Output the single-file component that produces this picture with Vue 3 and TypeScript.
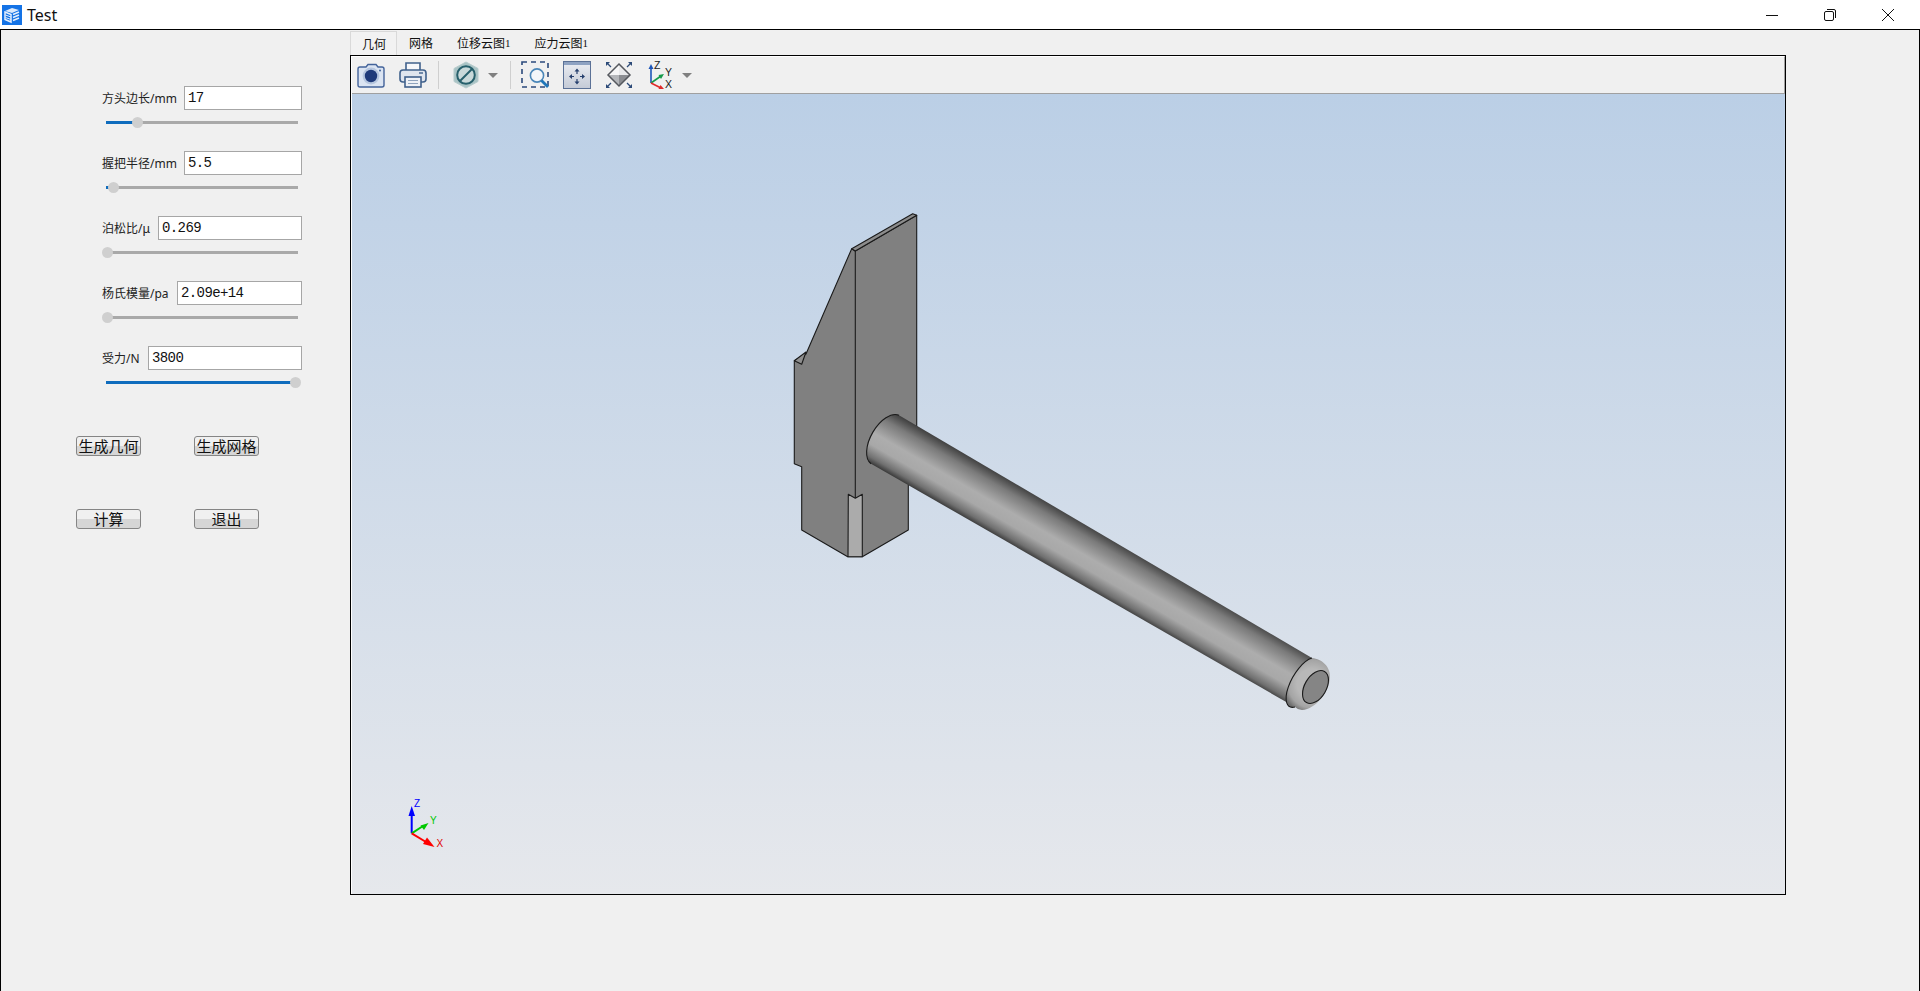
<template>
  <div class="window">
    <header class="titlebar">
      <svg class="app-icon" width="20" height="20" viewBox="0 0 20 20">
        <rect width="20" height="20" fill="#1473e6" />
        <path d="M3 6 L10 3 L17 5 L10 8 Z" fill="#dceafc" />
        <path d="M3 7 L9 9.5 V17 L3 14.5 Z" fill="none" stroke="#e6f0fd" stroke-width="1.5" />
        <path d="M3.5 10 L9 12 M3.5 12.5 L9 14.5" stroke="#e6f0fd" stroke-width="1" />
        <path d="M11 9.5 L17 7 M11 12.5 L17 10 M11 15.5 L17 13" stroke="#e6f0fd" stroke-width="1.6" />
      </svg>
      <span class="title-text">Test</span>
      <div class="win-controls">
        <div class="win-btn">
          <svg width="14" height="14" viewBox="0 0 14 14"><path d="M1 7.5 H13" stroke="#111" fill="none" /></svg>
        </div>
        <div class="win-btn">
          <svg width="14" height="14" viewBox="0 0 14 14">
            <rect x="1.5" y="3.5" width="9" height="9" rx="1.5" fill="none" stroke="#111" />
            <path d="M4 1.5 H11 Q12.5 1.5 12.5 3 V10" fill="none" stroke="#111" />
          </svg>
        </div>
        <div class="win-btn">
          <svg width="14" height="14" viewBox="0 0 14 14"><path d="M1 1 L13 13 M13 1 L1 13" stroke="#111" fill="none" /></svg>
        </div>
      </div>
    </header>

    <div class="body">
      <aside class="sidebar">
        <div v-for="p in params" :key="p.label" class="param">
          <div class="param-row">
            <label class="param-label">{{ p.label }}</label>
            <input class="param-input" type="text" :value="p.value" :style="{ width: `${p.inputWidth}px` }" />
          </div>
          <div class="slider">
            <div class="slider-fill" :style="{ width: fillWidth(p.ratio) }" />
            <div class="slider-handle" :style="{ left: handleLeft(p.ratio) }" />
          </div>
        </div>
        <div class="actions">
          <button v-for="a in actions" :key="a" class="action" type="button">{{ a }}</button>
        </div>
      </aside>

      <main class="main">
        <nav class="tabs">
          <div v-for="(t, i) in tabs" :key="t.name" :class="['tab', i === 0 && 'tab--active']">
            {{ t.name }}<span v-if="t.suffix" class="tab-suffix">{{ t.suffix }}</span>
          </div>
        </nav>
        <section class="frame">
          <div class="toolbar">
            <!-- camera -->
            <svg class="tool" viewBox="0 0 28 28">
              <path d="M9 6 L11 3.5 H19 L21 6 H25 Q27 6 27 8 V24 Q27 26 25 26 H3 Q1 26 1 24 V8 Q1 6 3 6 Z" fill="#dbe4f2" stroke="#43639a" stroke-width="1.4" />
              <circle cx="14" cy="15" r="8.4" fill="#b6c6df" />
              <circle cx="14" cy="15" r="6.2" fill="#1f3a7a" />
              <circle cx="23" cy="9.5" r="1" fill="#43639a" />
            </svg>
            <!-- printer -->
            <svg class="tool tool--gap" viewBox="0 0 28 28">
              <path d="M7 9 V2 H21 V9" fill="#f6f7fa" stroke="#40618c" stroke-width="1.6" />
              <rect x="1" y="9" width="26" height="12" rx="3" fill="#dfe5ee" stroke="#40618c" stroke-width="1.6" />
              <rect x="6" y="16" width="16" height="10" fill="#eef1f6" stroke="#40618c" stroke-width="1.6" />
              <path d="M9 19.5 H19 M9 22.5 H19" stroke="#8fa3bd" />
              <path d="M20 12 H24" stroke="#40618c" stroke-width="1.4" />
            </svg>
            <span class="sep" />
            <!-- hidden-style hexagon -->
            <svg class="tool" viewBox="0 0 28 28">
              <polygon points="14,1 26,7.5 26,20.5 14,27 2,20.5 2,7.5" fill="#a9c3c5" stroke="#b7cccd" />
              <circle cx="14" cy="14" r="8.8" fill="#c9d9da" stroke="#27606c" stroke-width="2" />
              <path d="M8 20 L20 8" stroke="#27606c" stroke-width="2" />
            </svg>
            <span class="caret" />
            <span class="sep sep--after-caret" />
            <!-- zoom window -->
            <svg class="tool" viewBox="0 0 28 28">
              <rect x="1" y="1" width="26" height="25" fill="none" stroke="#2b4a7c" stroke-width="1.6" stroke-dasharray="5 4" />
              <circle cx="16" cy="14.5" r="6.6" fill="#f3f6fa" stroke="#4a86b8" stroke-width="1.6" />
              <path d="M20.5 19.5 L27 26" stroke="#1f76b9" stroke-width="2.8" />
            </svg>
            <!-- fit view -->
            <svg class="tool tool--gap" viewBox="0 0 28 28">
              <defs>
                <linearGradient id="fitFill" x1="0" y1="0" x2="0" y2="1">
                  <stop offset="0" stop-color="#eceef3" />
                  <stop offset="1" stop-color="#c4cad6" />
                </linearGradient>
              </defs>
              <rect x="0.5" y="0.5" width="27" height="27" fill="url(#fitFill)" stroke="#5b7196" />
              <rect x="1" y="1" width="26" height="3" fill="#8ea2c2" />
              <path d="M14 10 V13 M14 18 V21 M8 15.5 H11 M17 15.5 H20" stroke="#27406e" stroke-width="1.2" />
              <path d="M14 7.5 L11.5 10.5 H16.5 Z M14 23.5 L11.5 20.5 H16.5 Z M6 15.5 L9 13 V18 Z M22 15.5 L19 13 V18 Z" fill="#27406e" />
            </svg>
            <!-- isometric view -->
            <svg class="tool tool--gap" viewBox="0 0 28 28">
              <polygon points="14,3 25,14 14,14" fill="#e9eaec" />
              <polygon points="14,3 3,14 14,14" fill="#f6f6f7" />
              <polygon points="14,25 3,14 14,14" fill="#b4b6ba" />
              <polygon points="14,25 25,14 14,14" fill="#8b8d92" />
              <polygon points="14,3 25,14 14,25 3,14" fill="none" stroke="#55585e" stroke-width="1.5" />
              <path d="M1 1 H5 L1 5 Z M27 1 H23 L27 5 Z M1 27 H5 L1 23 Z M27 27 H23 L27 23 Z" fill="#2c4a78" />
              <path d="M2 2 L6 6 M26 2 L22 6 M2 26 L6 22 M26 26 L22 22" stroke="#2c4a78" stroke-width="1.3" />
            </svg>
            <!-- axis triad -->
            <svg class="tool tool--triad" viewBox="0 0 28 28">
              <path d="M6 22 V7" stroke="#1d55b8" stroke-width="1.6" />
              <path d="M6 3 L3.5 8 H8.5 Z" fill="#1d55b8" />
              <path d="M6 22 L16 15" stroke="#169a4a" stroke-width="1.6" />
              <path d="M19 13 L13.5 14 L16 18 Z" fill="#169a4a" />
              <path d="M6 22 L16 27" stroke="#e02b2b" stroke-width="1.6" />
              <path d="M19 28 L13.5 28 L15.5 24 Z" fill="#e02b2b" />
              <text x="9" y="8" class="tool-axis">Z</text>
              <text x="20" y="15" class="tool-axis">Y</text>
              <text x="20" y="27" class="tool-axis">X</text>
            </svg>
            <span class="caret caret--triad" />
          </div>

          <div class="canvas">
            <svg class="scene" viewBox="352 94 1433 800" width="1433" height="800">
              <defs>
                <linearGradient id="handleShade" gradientUnits="userSpaceOnUse" x1="899" y1="415.3" x2="871" y2="463.7">
                  <stop offset="0" stop-color="#3f3f3f" />
                  <stop offset="0.2" stop-color="#7a7a7a" />
                  <stop offset="0.5" stop-color="#adadad" />
                  <stop offset="0.7" stop-color="#a8a8a8" />
                  <stop offset="0.9" stop-color="#707070" />
                  <stop offset="1" stop-color="#3a3a3a" />
                </linearGradient>
                <radialGradient id="filletShade" gradientUnits="userSpaceOnUse" cx="1312" cy="684" r="30">
                  <stop offset="0.5" stop-color="#b8b8b8" />
                  <stop offset="0.8" stop-color="#a4a4a4" />
                  <stop offset="1" stop-color="#6e6e6e" />
                </radialGradient>
              </defs>

              <!-- hammer head -->
              <g stroke="#1a1a1a" stroke-width="1.1" stroke-linejoin="round">
                <polygon fill="#808080" points="851.7,248.7 855.3,251 916.7,215.3 916.7,470 908.3,485 908.3,530 862.3,556.7 847.7,556.7 801.7,530 801.7,466.7 794.3,463.7 794.3,360.7 806,354 " />
                <polygon fill="#8c8c8c" points="851.7,248.7 912.7,213.7 916.7,215.3 855.3,251" />
                <polygon fill="#8e8e8e" points="794.3,360.7 806,352 801.7,364.3" />
                <path d="M855.3 251 V498" fill="none" />
                <polygon fill="#ababab" points="848.3,494.3 855.3,498.3 862.3,494.3 862.3,556.7 848,556.7" />
              </g>

              <!-- handle -->
              <path d="M899 415.3 L1312 658 L1295 707 L871 463.7 A28 15 -60 0 1 899 415.3 Z" fill="url(#handleShade)" />
              <path d="M899 415.3 A28 15 -60 0 0 871 463.7" fill="none" stroke="#1a1a1a" stroke-width="1.1" />

              <!-- rounded far end -->
              <path d="M1312 658 C1322 659 1331 667 1330 678 C1329 692 1316 709 1302 710 Q1298 710 1295 707 A25.6 11 -60 0 1 1312 658 Z" fill="url(#filletShade)" />
              <path d="M1312 658 A25.6 11 -60 0 0 1295 707" fill="none" stroke="#1a1a1a" stroke-width="1.1" />
              <ellipse cx="1315.5" cy="687" rx="18" ry="10.8" transform="rotate(-60 1315.5 687)" fill="#858585" stroke="#1a1a1a" stroke-width="1.1" />

              <!-- view triad -->
              <g fill="none" stroke-width="2">
                <path d="M411.7 833.3 V812" stroke="#0000ff" />
                <path d="M411.7 833.3 L423 826" stroke="#00c800" />
                <path d="M411.7 833.3 L426 842" stroke="#ff0000" />
              </g>
              <path d="M411.7 806 L408.5 816 H415 Z" fill="#0000ff" />
              <path d="M428.5 823 L420.5 825.5 L424 830 Z" fill="#00c800" />
              <path d="M434.5 847 L423 844 L427 837.5 Z" fill="#ff0000" />
              <text x="414" y="807" class="axis" fill="#0000ff">Z</text>
              <text x="430" y="824" class="axis" fill="#00c800">Y</text>
              <text x="436.5" y="847" class="axis" fill="#e00000">X</text>
            </svg>
          </div>
        </section>
      </main>
    </div>
  </div>
</template>

<script setup lang="ts">
interface Param {
  label: string;
  value: string;
  ratio: number;
  inputWidth: number;
}

const params: Param[] = [
  { label: '方头边长/mm', value: '17', ratio: 0.16, inputWidth: 118 },
  { label: '握把半径/mm', value: '5.5', ratio: 0.037, inputWidth: 118 },
  { label: '泊松比/μ', value: '0.269', ratio: 0, inputWidth: 144 },
  { label: '杨氏模量/pa', value: '2.09e+14', ratio: 0, inputWidth: 125 },
  { label: '受力/N', value: '3800', ratio: 1, inputWidth: 154 },
];

const actions = ['生成几何', '生成网格', '计算', '退出'];

const tabs = [
  { name: '几何' },
  { name: '网格' },
  { name: '位移云图', suffix: '1' },
  { name: '应力云图', suffix: '1' },
];

// handle travels 188px along the 192px groove
function fillWidth(ratio: number): string {
  return `${188 * ratio + 1}px`;
}

function handleLeft(ratio: number): string {
  return `${188 * ratio - 4.5}px`;
}
</script>

<style scoped>
.window {
  display: flex;
  flex-direction: column;
  height: 991px;
  background: #fff;
  font-family: "Noto Sans", "Noto Sans CJK SC", sans-serif;
  color: #111;
}
.titlebar {
  display: flex;
  align-items: center;
  flex: 0 0 29px;
  padding-left: 2px;
}
.title-text {
  margin-left: 5px;
  font-size: 16px;
}
.win-controls {
  display: flex;
  margin-left: auto;
  padding-right: 3px;
}
.win-btn {
  display: flex;
  align-items: center;
  justify-content: center;
  width: 58px;
  height: 29px;
}
.body {
  flex: 1;
  display: flex;
  min-height: 0;
  background: #f0f0f0;
  border: 1px solid #000;
  border-bottom: 0;
}
.sidebar {
  flex: 0 0 349px;
  display: flex;
  flex-direction: column;
  gap: 27px;
  padding: 56px 0 0 101px;
  box-sizing: border-box;
}
.param {
  width: 200px;
}
.param-row {
  display: flex;
  align-items: center;
  justify-content: space-between;
  height: 24px;
}
.param-label {
  font-size: 12px;
  color: #222;
  white-space: nowrap;
}
.param-input {
  height: 24px;
  box-sizing: border-box;
  padding: 0 3px;
  border: 1px solid #a6a6a6;
  background: #fff;
  font-family: "Liberation Mono", "Noto Sans CJK SC", monospace;
  font-size: 14px;
  letter-spacing: -0.6px;
  color: #111;
  outline: none;
}
.slider {
  position: relative;
  width: 192px;
  height: 3px;
  margin: 11px 0 0 4px;
  background: #a9a9a9;
}
.slider-fill {
  height: 100%;
  background: #0f6cbd;
}
.slider-handle {
  position: absolute;
  top: -4px;
  width: 11px;
  height: 11px;
  border-radius: 50%;
  background: #cfcfcf;
}
.actions {
  display: grid;
  grid-template-columns: 65px 65px;
  grid-auto-rows: 20px;
  gap: 53px;
  margin: 25px 0 0 -26px;
}
.action {
  margin: 0;
  padding: 0;
  border: 1px solid #858585;
  border-radius: 3px;
  background: linear-gradient(#f0f0f0 50%, #d6d6d6 50%);
  font-family: "Noto Sans CJK SC", sans-serif;
  font-size: 15px;
  line-height: 18px;
  color: #111;
  white-space: nowrap;
}
.main {
  display: flex;
  flex-direction: column;
  width: 1436px;
}
.tabs {
  display: flex;
  height: 25px;
  box-sizing: border-box;
  padding-top: 1px;
  font-size: 12px;
  line-height: 16px;
}
.tab {
  display: flex;
  align-items: center;
  padding: 0 12px;
  box-sizing: border-box;
  font-family: "Noto Sans CJK SC", sans-serif;
}
.tab--active {
  border: 1px solid #d9d9d9;
  border-bottom: 0;
  background: #f2f2f2;
  padding: 0 10px 0 11px;
}
.tab-suffix {
  font-family: "Liberation Serif", serif;
  font-size: 11px;
}
.frame {
  display: flex;
  flex-direction: column;
  height: 840px;
  box-sizing: border-box;
  border: 1px solid #000;
  padding-left: 1px;
  background: #fff;
}
.toolbar {
  display: flex;
  align-items: center;
  flex: 0 0 38px;
  box-sizing: border-box;
  padding-left: 5px;
  background: #f0f0f0;
  border-top: 1px solid #fff;
  border-right: 1px solid #a0a0a0;
  border-bottom: 1px solid #a0a0a0;
}
.tool {
  width: 28px;
  height: 28px;
  flex: none;
}
.tool--gap {
  margin-left: 14px;
}
.tool--triad {
  margin-left: 12px;
}
.tool-axis {
  font-family: "Liberation Sans", sans-serif;
  font-size: 10.5px;
  fill: #222;
}
.sep {
  width: 1px;
  height: 28px;
  margin: 0 13px 0 11px;
  background: #cfcfcf;
}
.sep--after-caret {
  margin-left: 12px;
  margin-right: 10px;
}
.caret {
  width: 0;
  height: 0;
  margin-left: 8px;
  border-left: 5px solid transparent;
  border-right: 5px solid transparent;
  border-top: 5px solid #808080;
}
.caret--triad {
  margin-left: 9px;
}
.canvas {
  flex: 1;
  min-height: 0;
  overflow: hidden;
  background: linear-gradient(#bbcfe6, #e6e8ec);
}
.scene {
  display: block;
}
.axis {
  font-family: "Liberation Sans", sans-serif;
  font-size: 10px;
}
</style>

<style>
html,
body {
  margin: 0;
  overflow: hidden;
}
</style>
